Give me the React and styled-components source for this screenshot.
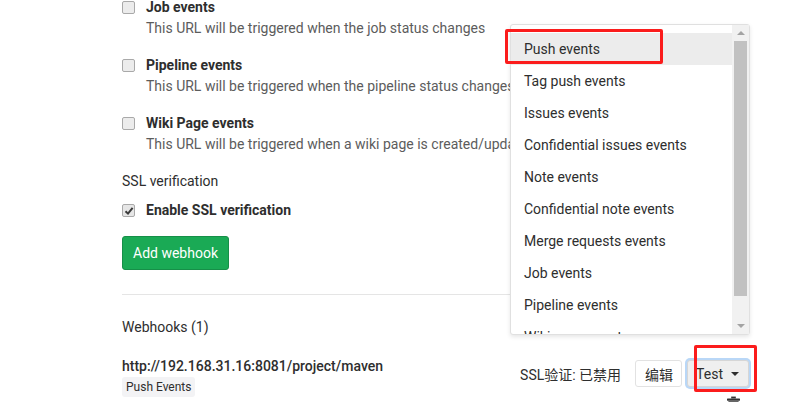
import React from "react";
import styled, { createGlobalStyle } from "styled-components";

const GlobalStyle = createGlobalStyle`
  html, body {
    margin: 0;
    background: #fff;
    overflow: hidden;
  }
  body {
    font-family: Roboto, "Noto Sans CJK SC", sans-serif;
    font-size: 14px;
    color: #2e2e2e;
  }
`;

const events = [
  "Push events",
  "Tag push events",
  "Issues events",
  "Confidential issues events",
  "Note events",
  "Confidential note events",
  "Merge requests events",
  "Job events",
  "Pipeline events",
  "Wiki page events",
];

const triggers = [
  { title: "Job events", help: "This URL will be triggered when the job status changes" },
  { title: "Pipeline events", help: "This URL will be triggered when the pipeline status changes" },
  { title: "Wiki Page events", help: "This URL will be triggered when a wiki page is created/updated" },
];

function App() {
  return (
    <>
      <GlobalStyle />
      <Page>
        {triggers.map((t) => (
          <CheckRow key={t.title}>
            <Box />
            <div>
              <CheckTitle>{t.title}</CheckTitle>
              <CheckHelp>{t.help}</CheckHelp>
            </div>
          </CheckRow>
        ))}

        <SectionLabel>SSL verification</SectionLabel>
        <CheckRow $tight>
          <Box $checked>
            <svg width="10" height="10" viewBox="0 0 10 10">
              <path d="M1.5 5.2 L4 7.6 L8.6 1.8" fill="none" stroke="#3a3a3a" strokeWidth="2" />
            </svg>
          </Box>
          <CheckTitle>Enable SSL verification</CheckTitle>
        </CheckRow>

        <AddButton>Add webhook</AddButton>

        <Divider />

        <ListTitle>Webhooks (1)</ListTitle>

        <HookRow>
          <div>
            <HookUrl>http://192.168.31.16:8081/project/maven</HookUrl>
            <Badge>Push Events</Badge>
          </div>
          <Actions>
            <ButtonLine>
              <SslState>SSL验证: 已禁用</SslState>
              <Btn>编辑</Btn>
              <TestWrap>
                <Btn $active>
                  Test <Caret />
                </Btn>
                <Menu>
                  <MenuList>
                    {events.map((e, i) => (
                      <MenuItem key={e} $hover={i === 0}>
                        {e}
                      </MenuItem>
                    ))}
                  </MenuList>
                  <ScrollBar>
                    <ArrowUp />
                    <Thumb />
                    <ArrowDown />
                  </ScrollBar>
                  <Mark $left={-6} $top={4} $w={158} $h={35} />
                </Menu>
                <Mark $left={7} $top={-15} $w={63} $h={47} />
              </TestWrap>
            </ButtonLine>
            <TrashLine>
              <svg width="13" height="16" viewBox="0 0 14 16">
                <rect x="4.5" y="0" width="5" height="2" fill="#333" />
                <rect x="0" y="2" width="14" height="2.5" rx="0.5" fill="#333" />
                <path d="M1.5 5 H12.5 L11.6 15 H2.4 Z" fill="#333" />
              </svg>
            </TrashLine>
          </Actions>
        </HookRow>
      </Page>
    </>
  );
}

const Page = styled.div`
  width: 628px;
  padding-left: 122px;
  margin-top: -3px;
`;

const CheckRow = styled.div`
  display: flex;
  align-items: flex-start;
  gap: 11px;
  margin-bottom: ${(p) => (p.$tight ? "16px" : "17px")};
`;

const Box = styled.span`
  flex: none;
  width: 11px;
  height: 11px;
  margin-top: 4px;
  border: 1px solid #a9a9a9;
  border-radius: 2px;
  background: ${(p) => (p.$checked ? "#e6e6e6" : "#ececec")};
  display: flex;
  align-items: center;
  justify-content: center;
`;

const CheckTitle = styled.div`
  font-weight: 700;
  line-height: 20px;
  color: #2e2e2e;
`;

const CheckHelp = styled.div`
  margin-top: 1px;
  line-height: 20px;
  color: #5c5c5c;
  white-space: nowrap;
`;

const SectionLabel = styled.div`
  line-height: 20px;
  margin-bottom: 9px;
  color: #2e2e2e;
`;

const AddButton = styled.button`
  display: block;
  height: 34px;
  padding: 0 10px;
  font-family: inherit;
  font-size: 14px;
  color: #fff;
  background: #1aaa55;
  border: 1px solid #168f48;
  border-radius: 3px;
`;

const Divider = styled.hr`
  margin: 24px 0 0;
  border: 0;
  border-top: 1px solid #e5e5e5;
`;

const ListTitle = styled.div`
  margin-top: 22px;
  line-height: 20px;
  color: #2e2e2e;
`;

const HookRow = styled.div`
  display: flex;
  justify-content: space-between;
  align-items: flex-start;
  margin-top: 19px;
`;

const HookUrl = styled.div`
  font-weight: 500;
  line-height: 20px;
  color: #2e2e2e;
`;

const Badge = styled.span`
  display: inline-block;
  margin-top: 1px;
  padding: 0 4px;
  line-height: 20px;
  font-size: 12px;
  color: #2e2e2e;
  background: #f3f3f5;
  border-radius: 3px;
`;

const Actions = styled.div`
  display: flex;
  flex-direction: column;
  align-items: flex-end;
  margin-top: 4px;
  margin-right: 1px;
`;

const ButtonLine = styled.div`
  display: flex;
  align-items: center;
`;

const SslState = styled.span`
  margin-right: 14px;
  color: #2e2e2e;
`;

const Btn = styled.button`
  display: flex;
  align-items: center;
  gap: 8px;
  height: 27px;
  padding: ${(p) => (p.$active ? "0 9px 0 8px" : "0 8px 0 9px")};
  font-family: inherit;
  font-size: 14px;
  color: #2e2e2e;
  background: ${(p) => (p.$active ? "#efefef" : "#fff")};
  border: 1px solid ${(p) => (p.$active ? "#d6d6d6" : "#e2e2e2")};
  border-radius: 3px;
  box-shadow: ${(p) => (p.$active ? "0 0 0 2px #b9d7f7" : "none")};
`;

const Caret = styled.span`
  width: 0;
  height: 0;
  border-left: 4px solid transparent;
  border-right: 4px solid transparent;
  border-top: 4px solid #2e2e2e;
`;

const TestWrap = styled.div`
  position: relative;
  margin-left: 5px;
`;

const Menu = styled.div`
  position: absolute;
  right: -1px;
  bottom: calc(100% + 25px);
  width: 238px;
  height: 309px;
  display: flex;
  background: #fff;
  border: 1px solid #e0e0e0;
  border-radius: 3px;
  box-shadow: 0 2px 4px rgba(0, 0, 0, 0.1);
`;

const MenuList = styled.div`
  flex: 1;
  overflow: hidden;
  padding-top: 8px;
`;

const MenuItem = styled.div`
  height: 32px;
  line-height: 32px;
  padding: 0 13px;
  white-space: nowrap;
  color: #2e2e2e;
  background: ${(p) => (p.$hover ? "#ececec" : "transparent")};
`;

const ScrollBar = styled.div`
  flex: none;
  width: 17px;
  background: #f1f1f1;
  display: flex;
  flex-direction: column;
  align-items: center;
`;

const ArrowUp = styled.div`
  margin: 6px 0 6px;
  width: 0;
  height: 0;
  border-left: 4px solid transparent;
  border-right: 4px solid transparent;
  border-bottom: 4px solid #a3a3a3;
`;

const Thumb = styled.div`
  width: 13px;
  height: 255px;
  background: #c1c1c1;
`;

const ArrowDown = styled.div`
  margin-top: auto;
  margin-bottom: 6px;
  width: 0;
  height: 0;
  border-left: 4px solid transparent;
  border-right: 4px solid transparent;
  border-top: 4px solid #a3a3a3;
`;

const Mark = styled.div`
  position: absolute;
  left: ${(p) => p.$left}px;
  top: ${(p) => p.$top}px;
  width: ${(p) => p.$w}px;
  height: ${(p) => p.$h}px;
  box-sizing: border-box;
  border: 3px solid #fb1c1c;
  border-radius: 2px;
  pointer-events: none;
`;

const TrashLine = styled.div`
  margin-top: 9px;
  margin-right: 9px;
  line-height: 0;
`;

export default App;
